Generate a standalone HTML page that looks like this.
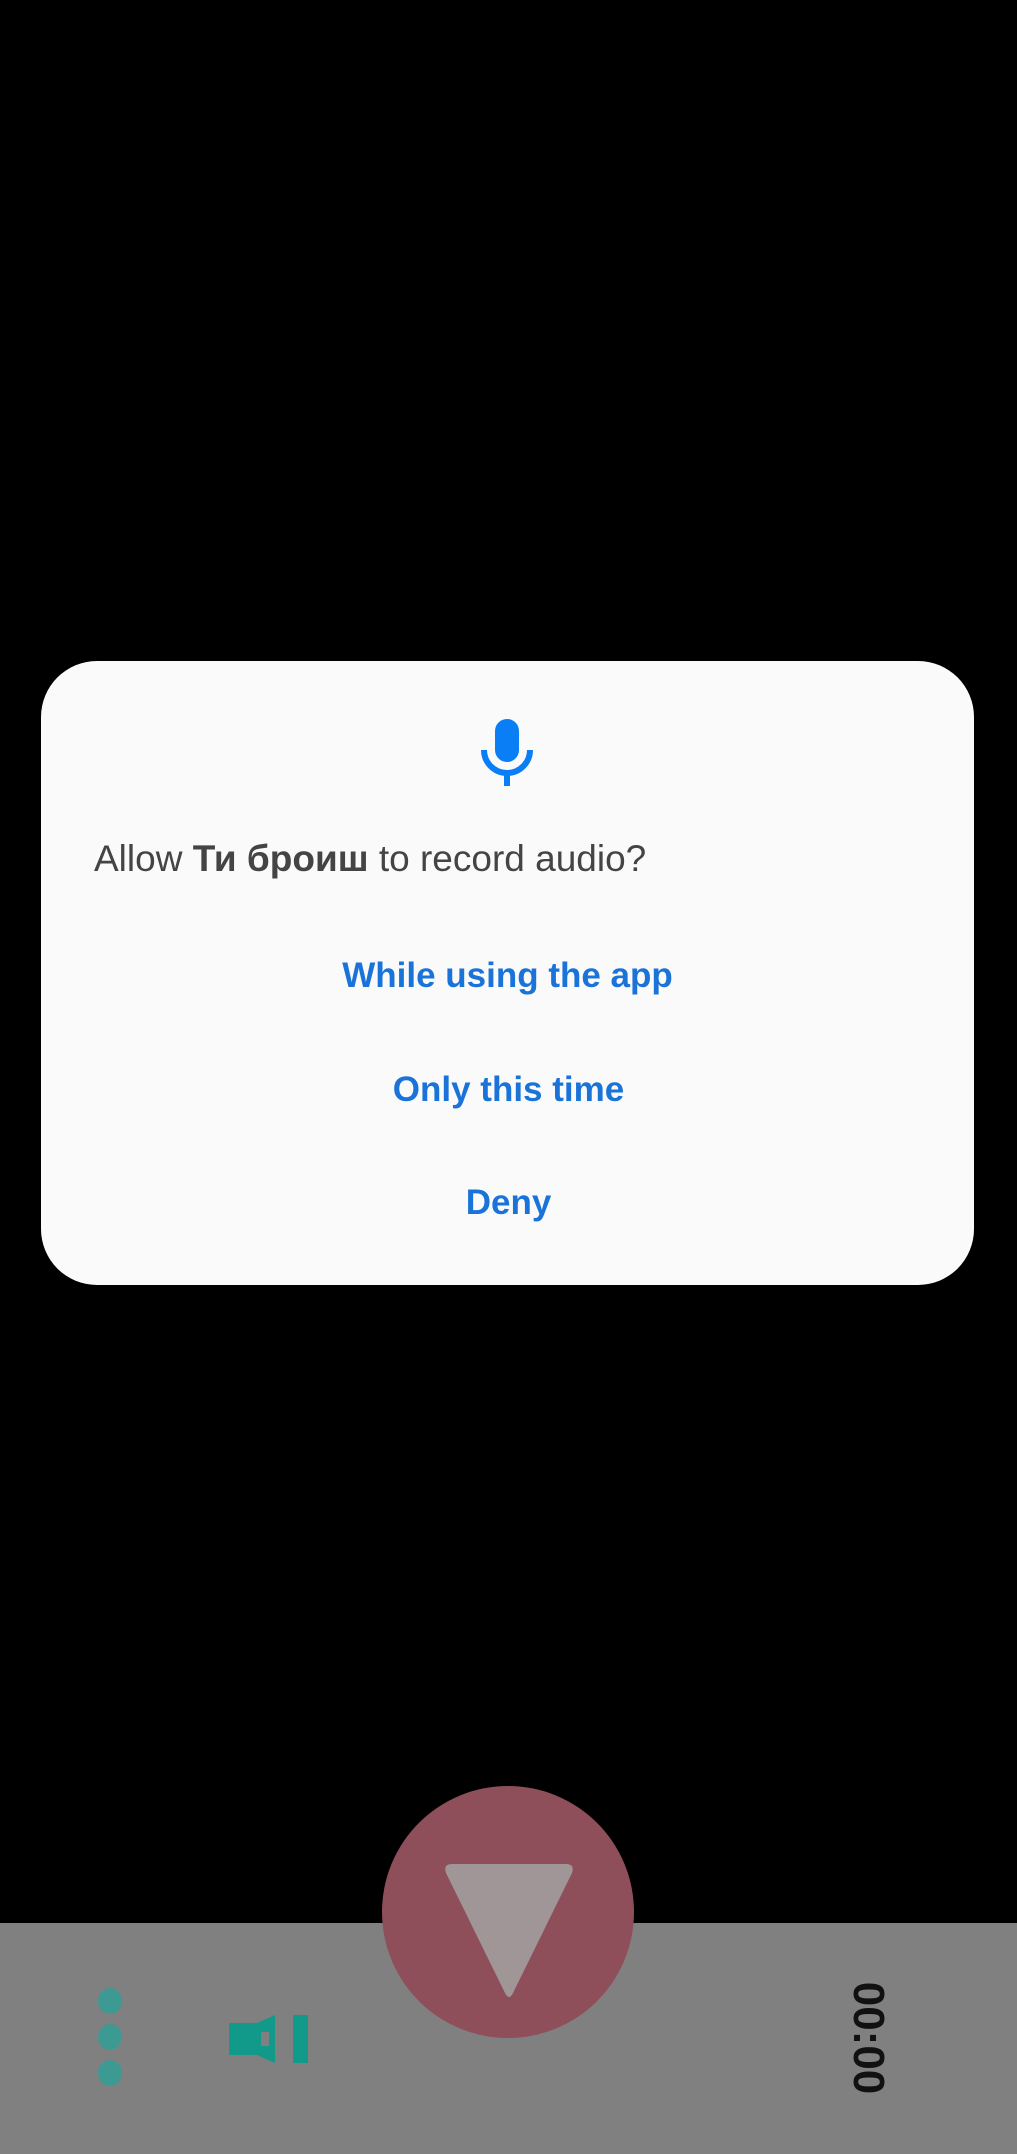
<!DOCTYPE html>
<html><head><meta charset="utf-8"><style>
html,body{margin:0;padding:0;}
body{width:1017px;height:2154px;background:#000;position:relative;overflow:hidden;font-family:"Liberation Sans",Arial,sans-serif;}
.dlg{position:absolute;left:41px;top:661px;width:933px;height:624px;background:#fafafa;border-radius:56px;}
.t{position:absolute;left:94px;top:839px;font-size:37px;color:#444;white-space:nowrap;line-height:40px;}
.b{position:absolute;left:0;width:1017px;text-align:center;font-size:35px;font-weight:bold;color:#1a73d9;line-height:40px;}
.bar{position:absolute;left:0;top:1923px;width:1017px;height:231px;background:#808080;}
.dot{position:absolute;width:24px;height:26px;border-radius:50%;background:#3c9a92;left:98px;}
.circ{position:absolute;left:382px;top:1786px;width:252px;height:252px;border-radius:50%;background:#8e4f5b;}
.tm{position:absolute;left:868px;top:2038px;transform:translate(-50%,-50%) rotate(90deg);font-size:44px;font-weight:bold;color:#111;line-height:44px;}
</style></head><body>
<div class="dlg"></div>
<svg style="position:absolute;left:480px;top:718px" width="54" height="68" viewBox="0 0 54 68">
<rect x="15" y="1" width="24" height="43" rx="12" fill="#0a7ff5"/>
<path d="M4 32 A23 23 0 0 0 50 32" fill="none" stroke="#0a7ff5" stroke-width="6"/>
<rect x="24" y="52" width="6" height="16" fill="#0a7ff5"/>
</svg>
<div class="t">Allow <b>Ти броиш</b> to record audio?</div>
<div class="b" style="top:956px;left:-1px">While using the app</div>
<div class="b" style="top:1070px">Only this time</div>
<div class="b" style="top:1183px">Deny</div>
<div class="bar"></div>
<div class="circ"></div>
<svg style="position:absolute;left:438px;top:1858px" width="142" height="145" viewBox="0 0 142 145">
<path d="M14 6 L128 6 Q137 6 134 15 L75 135 Q71 143 67 135 L8 15 Q5 6 14 6Z" fill="#a09597"/>
</svg>
<div class="dot" style="top:1988px"></div>
<div class="dot" style="top:2024px"></div>
<div class="dot" style="top:2060px"></div>
<svg style="position:absolute;left:229px;top:2014px" width="80" height="50" viewBox="0 0 80 50">
<path d="M0 9 H28 L46 1 V49 L28 41 H0Z" fill="#11998a"/>
<rect x="32" y="18" width="8" height="14" fill="#808080"/>
<rect x="64" y="1" width="15" height="48" fill="#11998a"/>
</svg>
<div class="tm">00:00</div>
</body></html>
